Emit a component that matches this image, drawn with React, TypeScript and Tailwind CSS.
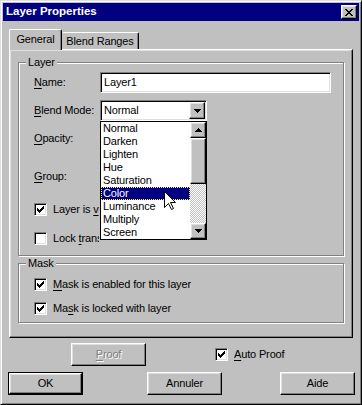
import React from 'react';

const raised =
  'border border-t-white border-l-white border-r-black border-b-black shadow-[inset_-1px_-1px_0_#808080,inset_1px_1px_0_#dfdfdf] bg-[#c0c0c0]';
const sunken =
  'border border-t-[#808080] border-l-[#808080] border-r-white border-b-white shadow-[inset_1px_1px_0_#000,inset_-1px_-1px_0_#dfdfdf]';
const etched = 'border border-[#808080] shadow-[inset_1px_1px_0_#fff,1px_1px_0_#fff]';

const CheckMark = () => (
  <svg width="7" height="7" viewBox="0 0 7 7" shapeRendering="crispEdges">
    <path
      d="M6 0h1v3h-1zM5 1h1v3h-1zM4 2h1v3h-1zM0 2h1v3h-1zM1 3h1v3h-1zM2 4h1v3h-1zM3 3h1v3h-1z"
      fill="#000"
    />
  </svg>
);

const Checkbox = ({ checked }: { checked: boolean }) => (
  <div className={`w-[13px] h-[13px] bg-white flex items-center justify-center shrink-0 ${sunken}`}>
    {checked && <CheckMark />}
  </div>
);

const Arrow = ({ up }: { up?: boolean }) => (
  <svg width="7" height="4" viewBox="0 0 7 4" shapeRendering="crispEdges">
    {up ? <path d="M3 0h1v1h1v1h1v1h1v1h-7v-1h1v-1h1v-1h1z" fill="#000" /> : <path d="M0 0h7v1h-1v1h-1v1h-1v1h-1v-1h-1v-1h-1v-1h-1z" fill="#000" />}
  </svg>
);

const U = ({ children }: { children: React.ReactNode }) => <span className="underline underline-offset-[2px]">{children}</span>;

const GroupBox = ({ label, className, children }: { label: string; className: string; children: React.ReactNode }) => (
  <div className={`relative ${etched} ${className}`}>
    <span className="absolute -top-[7px] left-[7px] px-[2px] bg-[#c0c0c0] leading-[13px]">{label}</span>
    {children}
  </div>
);

// clip: label is partly hidden behind the open dropdown list
const CheckRow = ({
  checked,
  className,
  clip,
  children
}: {
  checked: boolean;
  className: string;
  clip?: boolean;
  children: React.ReactNode;
}) => (
  <div className={`flex items-center h-[13px] gap-[6px] ${className}`}>
    <Checkbox checked={checked} />
    <span className={`leading-[15px] whitespace-nowrap ${clip ? 'w-[46px] overflow-hidden' : ''}`}>{children}</span>
  </div>
);

const modes = ['Normal', 'Darken', 'Lighten', 'Hue', 'Saturation', 'Color', 'Luminance', 'Multiply', 'Screen'];

export default function App() {
  return (
    <div
      className={`w-[362px] h-[405px] p-[2px] text-[11px] tracking-[-0.15px] text-black font-['Liberation_Sans',Arial,sans-serif] border border-t-[#dfdfdf] border-l-[#dfdfdf] border-r-black border-b-black shadow-[inset_1px_1px_0_#fff,inset_-1px_-1px_0_#808080] bg-[#c0c0c0] flex flex-col overflow-hidden`}
    >
      {/* Title bar */}
      <div className="h-[18px] bg-[#000080] flex items-center justify-between pl-[3px] pr-[2px] shrink-0">
        <span className="text-white font-bold text-[11.5px] tracking-normal leading-none">Layer Properties</span>
        <div className={`w-[16px] h-[14px] flex items-center justify-center ${raised}`}>
          <svg width="8" height="7" viewBox="0 0 8 7" shapeRendering="crispEdges">
            <path
              d="M0 0h2v1h-2zM6 0h2v1h-2zM1 1h2v1h-2zM5 1h2v1h-2zM2 2h4v1h-4zM3 3h2v1h-2zM2 4h4v1h-4zM1 5h2v1h-2zM5 5h2v1h-2zM0 6h2v1h-2zM6 6h2v1h-2z"
              fill="#000"
            />
          </svg>
        </div>
      </div>

      {/* Tabs */}
      <div className="relative z-10 flex items-end mt-[8px] ml-[6px]">
        <div className="h-[21px] -mb-px w-[53px] bg-[#c0c0c0] rounded-t-[2px] border-t border-l border-r border-t-white border-l-white border-r-black shadow-[inset_-1px_0_0_#808080] flex items-center justify-center pb-[1px]">
          General
        </div>
        <div className="h-[17px] w-[77px] bg-[#c0c0c0] rounded-t-[2px] border-t border-r border-t-white border-r-black shadow-[inset_-1px_0_0_#808080] flex items-center justify-center">
          Blend Ranges
        </div>
      </div>

      {/* Tab panel */}
      <div className={`ml-[6px] w-[344px] h-[289px] flex flex-col ${raised}`}>
        <GroupBox label="Layer" className="ml-[8px] mt-[12px] w-[326px] h-[194px] flex flex-col pl-[15px]">
          <div className="flex items-center h-[21px] mt-[9px]">
            <span className="w-[66px]">
              <U>N</U>ame:
            </span>
            <div className={`w-[231px] h-[21px] bg-white flex items-center pl-[3px] ${sunken}`}>Layer1</div>
          </div>

          <div className="flex items-center h-[21px] mt-[7px] relative z-20">
            <span className="w-[66px]">
              <U>B</U>lend Mode:
            </span>
            <div className={`relative w-[107px] h-[21px] bg-white flex items-center justify-between pl-[3px] pr-[1px] ${sunken}`}>
              <span>Normal</span>
              <div className={`w-[16px] h-[17px] flex items-center justify-center ${raised}`}>
                <Arrow />
              </div>

              {/* Open dropdown list */}
              <div className="absolute left-[-1px] top-[20px] w-[107px] h-[119px] bg-white border border-black flex">
                <div className="flex-1 flex flex-col">
                  {modes.map((m) => (
                    <div
                      key={m}
                      className={`h-[13px] leading-[11px] pl-[1px] ${
                        m === 'Color' ? 'bg-[#000080] text-white border border-dotted border-[#ffff80]' : 'border border-transparent'
                      }`}
                    >
                      {m}
                    </div>
                  ))}
                </div>
                <div className="w-[16px] flex flex-col">
                  <div className={`h-[16px] flex items-center justify-center ${raised}`}>
                    <Arrow up />
                  </div>
                  <div className={`h-[46px] ${raised}`} />
                  <div className="h-[39px] bg-[image:repeating-conic-gradient(#c0c0c0_0_25%,#fff_0_50%)] bg-[length:2px_2px]" />
                  <div className={`h-[16px] flex items-center justify-center ${raised}`}>
                    <Arrow />
                  </div>
                </div>
                <svg className="absolute left-[63px] top-[69px]" width="13" height="20" viewBox="0 0 13 20">
                  <path d="M0.5 0.5V16.5L4.5 12.5L7.5 18.5L9.5 17.5L6.5 11.5H11.5Z" fill="#fff" stroke="#000" strokeWidth="1" />
                </svg>
              </div>
            </div>
          </div>

          <div className="flex items-center h-[21px] mt-[7px]">
            <span>
              <U>O</U>pacity:
            </span>
          </div>

          <div className="flex items-center h-[21px] mt-[17px]">
            <span>
              <U>G</U>roup:
            </span>
          </div>

          <CheckRow checked clip className="mt-[16px]">
            Layer is <U>v</U>isible
          </CheckRow>
          <CheckRow checked={false} clip className="mt-[16px]">
            Lock <U>t</U>ransparency
          </CheckRow>
        </GroupBox>

        <GroupBox label="Mask" className="ml-[8px] mt-[7px] w-[326px] h-[60px] flex flex-col pl-[15px]">
          <CheckRow checked className="mt-[14px]">
            <U>M</U>ask is enabled for this layer
          </CheckRow>
          <CheckRow checked className="mt-[11px]">
            Ma<U>s</U>k is locked with layer
          </CheckRow>
        </GroupBox>
      </div>

      {/* Proof row */}
      <div className="flex items-center h-[23px] mt-[5px]">
        <div className={`ml-[68px] w-[75px] h-[23px] flex items-center justify-center text-[#808080] [text-shadow:1px_1px_0_#fff] ${raised}`}>
          <span>
            <U>P</U>roof
          </span>
        </div>
        <CheckRow checked className="ml-[69px]">
          <U>A</U>uto Proof
        </CheckRow>
      </div>

      {/* Buttons */}
      <div className="flex items-center h-[23px] mt-[6px]">
        <div className="ml-[5px] w-[75px] h-[23px] border border-black flex">
          <div className={`flex-1 flex items-center justify-center ${raised}`}>OK</div>
        </div>
        <div className={`ml-[64px] w-[75px] h-[23px] flex items-center justify-center ${raised}`}>Annuler</div>
        <div className={`ml-[58px] w-[75px] h-[23px] flex items-center justify-center ${raised}`}>Aide</div>
      </div>
    </div>
  );
}
